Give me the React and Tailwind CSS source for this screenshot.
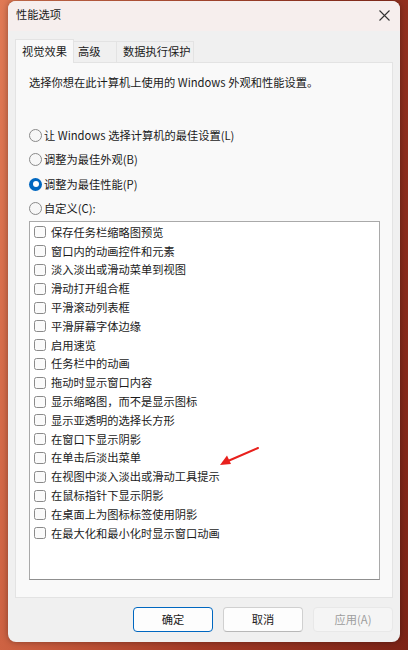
import React from "react";

const items = [
  "保存任务栏缩略图预览",
  "窗口内的动画控件和元素",
  "淡入淡出或滑动菜单到视图",
  "滑动打开组合框",
  "平滑滚动列表框",
  "平滑屏幕字体边缘",
  "启用速览",
  "任务栏中的动画",
  "拖动时显示窗口内容",
  "显示缩略图，而不是显示图标",
  "显示亚透明的选择长方形",
  "在窗口下显示阴影",
  "在单击后淡出菜单",
  "在视图中淡入淡出或滑动工具提示",
  "在鼠标指针下显示阴影",
  "在桌面上为图标标签使用阴影",
  "在最大化和最小化时显示窗口动画",
];

const radios = [
  { label: "让 Windows 选择计算机的最佳设置(L)", checked: false },
  { label: "调整为最佳外观(B)", checked: false },
  { label: "调整为最佳性能(P)", checked: true },
  { label: "自定义(C):", checked: false },
];

const font = { fontFamily: '"Noto Sans CJK SC", "Noto Sans", sans-serif' };

function Radio({ checked }) {
  if (checked) {
    return (
      <span className="w-[13px] h-[13px] rounded-full bg-[#0067c0] flex items-center justify-center shrink-0">
        <span className="w-[6px] h-[6px] rounded-full bg-white" />
      </span>
    );
  }
  return <span className="w-[13px] h-[13px] rounded-full border border-[#8a8a8a] bg-[#f7f7f7] shrink-0" />;
}

export default function App() {
  return (
    <div
      className="w-[408px] h-[650px] overflow-hidden relative bg-[linear-gradient(100deg,#e07a55_0%,#c75a3c_30%,#a33a26_60%,#7c2316_100%)] pt-[1px] pl-[8px]"
      style={font}
    >
      <div className="w-[392px] h-[641px] rounded-[8px] bg-[#f0f0f0] flex flex-col overflow-hidden shadow-[0_0_6px_rgba(0,0,0,0.35)] text-[11.25px] text-[#1a1a1a] leading-none">
        {/* title bar */}
        <div className="h-[30px] bg-[#f6eeed] flex items-center justify-between pl-[8px] pr-[8px] shrink-0">
          <span className="text-[11.25px] text-[#1a1a1a] mt-[-2px]">性能选项</span>
          <svg width="11" height="11" viewBox="0 0 11 11" className="mr-[2px] mt-[-2px]">
            <path d="M0.5 0.5 L10.5 10.5 M10.5 0.5 L0.5 10.5" stroke="#333" strokeWidth="1.1" />
          </svg>
        </div>

        {/* body */}
        <div className="flex-1 flex flex-col px-[7px] pt-[8px]">
          {/* tabs */}
          <div className="flex items-end h-[23px] relative z-10">
            <div className="w-[59px] bg-[#f9f9f9] border border-b-0 border-[#e3e3e3] flex items-center pl-[6px] mb-[-1px] h-[24px]">
              视觉效果
            </div>
            <div className="w-[43px] h-[21px] bg-[#f0f0f0] border-t border-r border-[#e3e3e3] flex items-center pl-[4px]">
              高级
            </div>
            <div className="w-[77px] h-[21px] bg-[#f0f0f0] border-t border-r border-[#e3e3e3] flex items-center pl-[6px]">
              数据执行保护
            </div>
          </div>

          {/* panel */}
          <div className="w-[378px] h-[536px] bg-[#f9f9f9] border border-[#e3e3e3] flex flex-col pl-[13px]">
            <div className="mt-[14px] h-[12px] flex items-center">选择你想在此计算机上使用的 Windows 外观和性能设置。</div>

            <div className="flex flex-col mt-[34px]">
              {radios.map((r, i) => (
                <div key={i} className="flex items-center gap-[2px] h-[24.5px]">
                  <Radio checked={r.checked} />
                  <span>{r.label}</span>
                </div>
              ))}
            </div>

            <div className="mt-[0px] w-[351px] h-[359px] bg-white border border-[#a9a9a9] border-b-[#8f8f8f] flex flex-col pt-[1px]">
              {items.map((t, i) => (
                <div key={i} className="flex items-center h-[18.8px] pl-[4px]">
                  <span className="w-[12px] h-[12px] rounded-[2.5px] border border-[#8a8a8a] bg-[#fafafa] shrink-0" />
                  <span className="ml-[5px]">{t}</span>
                </div>
              ))}
            </div>
          </div>

          {/* buttons */}
          <div className="flex justify-end gap-[10px] mt-[9px]">
            <button className="w-[80px] h-[25px] rounded-[4px] bg-[#fdfdfd] border border-[#0067c0] text-[#1a1a1a] text-[11.25px]" style={font}>
              确定
            </button>
            <button className="w-[80px] h-[25px] rounded-[4px] bg-[#fdfdfd] border border-[#d0d0d0] border-b-[#b8b8b8] text-[#1a1a1a] text-[11.25px]" style={font}>
              取消
            </button>
            <button className="w-[80px] h-[25px] rounded-[4px] bg-[#f5f5f5] border border-[#e8e8e8] text-[#9d9d9d] text-[11.25px]" style={font}>
              应用(A)
            </button>
          </div>
        </div>
      </div>

      {/* red annotation arrow */}
      <svg className="absolute left-[216px] top-[444px]" width="46" height="26" viewBox="0 0 46 26">
        <path d="M42 4 L12 17" stroke="#e8201c" strokeWidth="2" strokeLinecap="round" />
        <path d="M4 21 L11 11.5 L15 20 Z" fill="#e8201c" />
      </svg>
    </div>
  );
}
